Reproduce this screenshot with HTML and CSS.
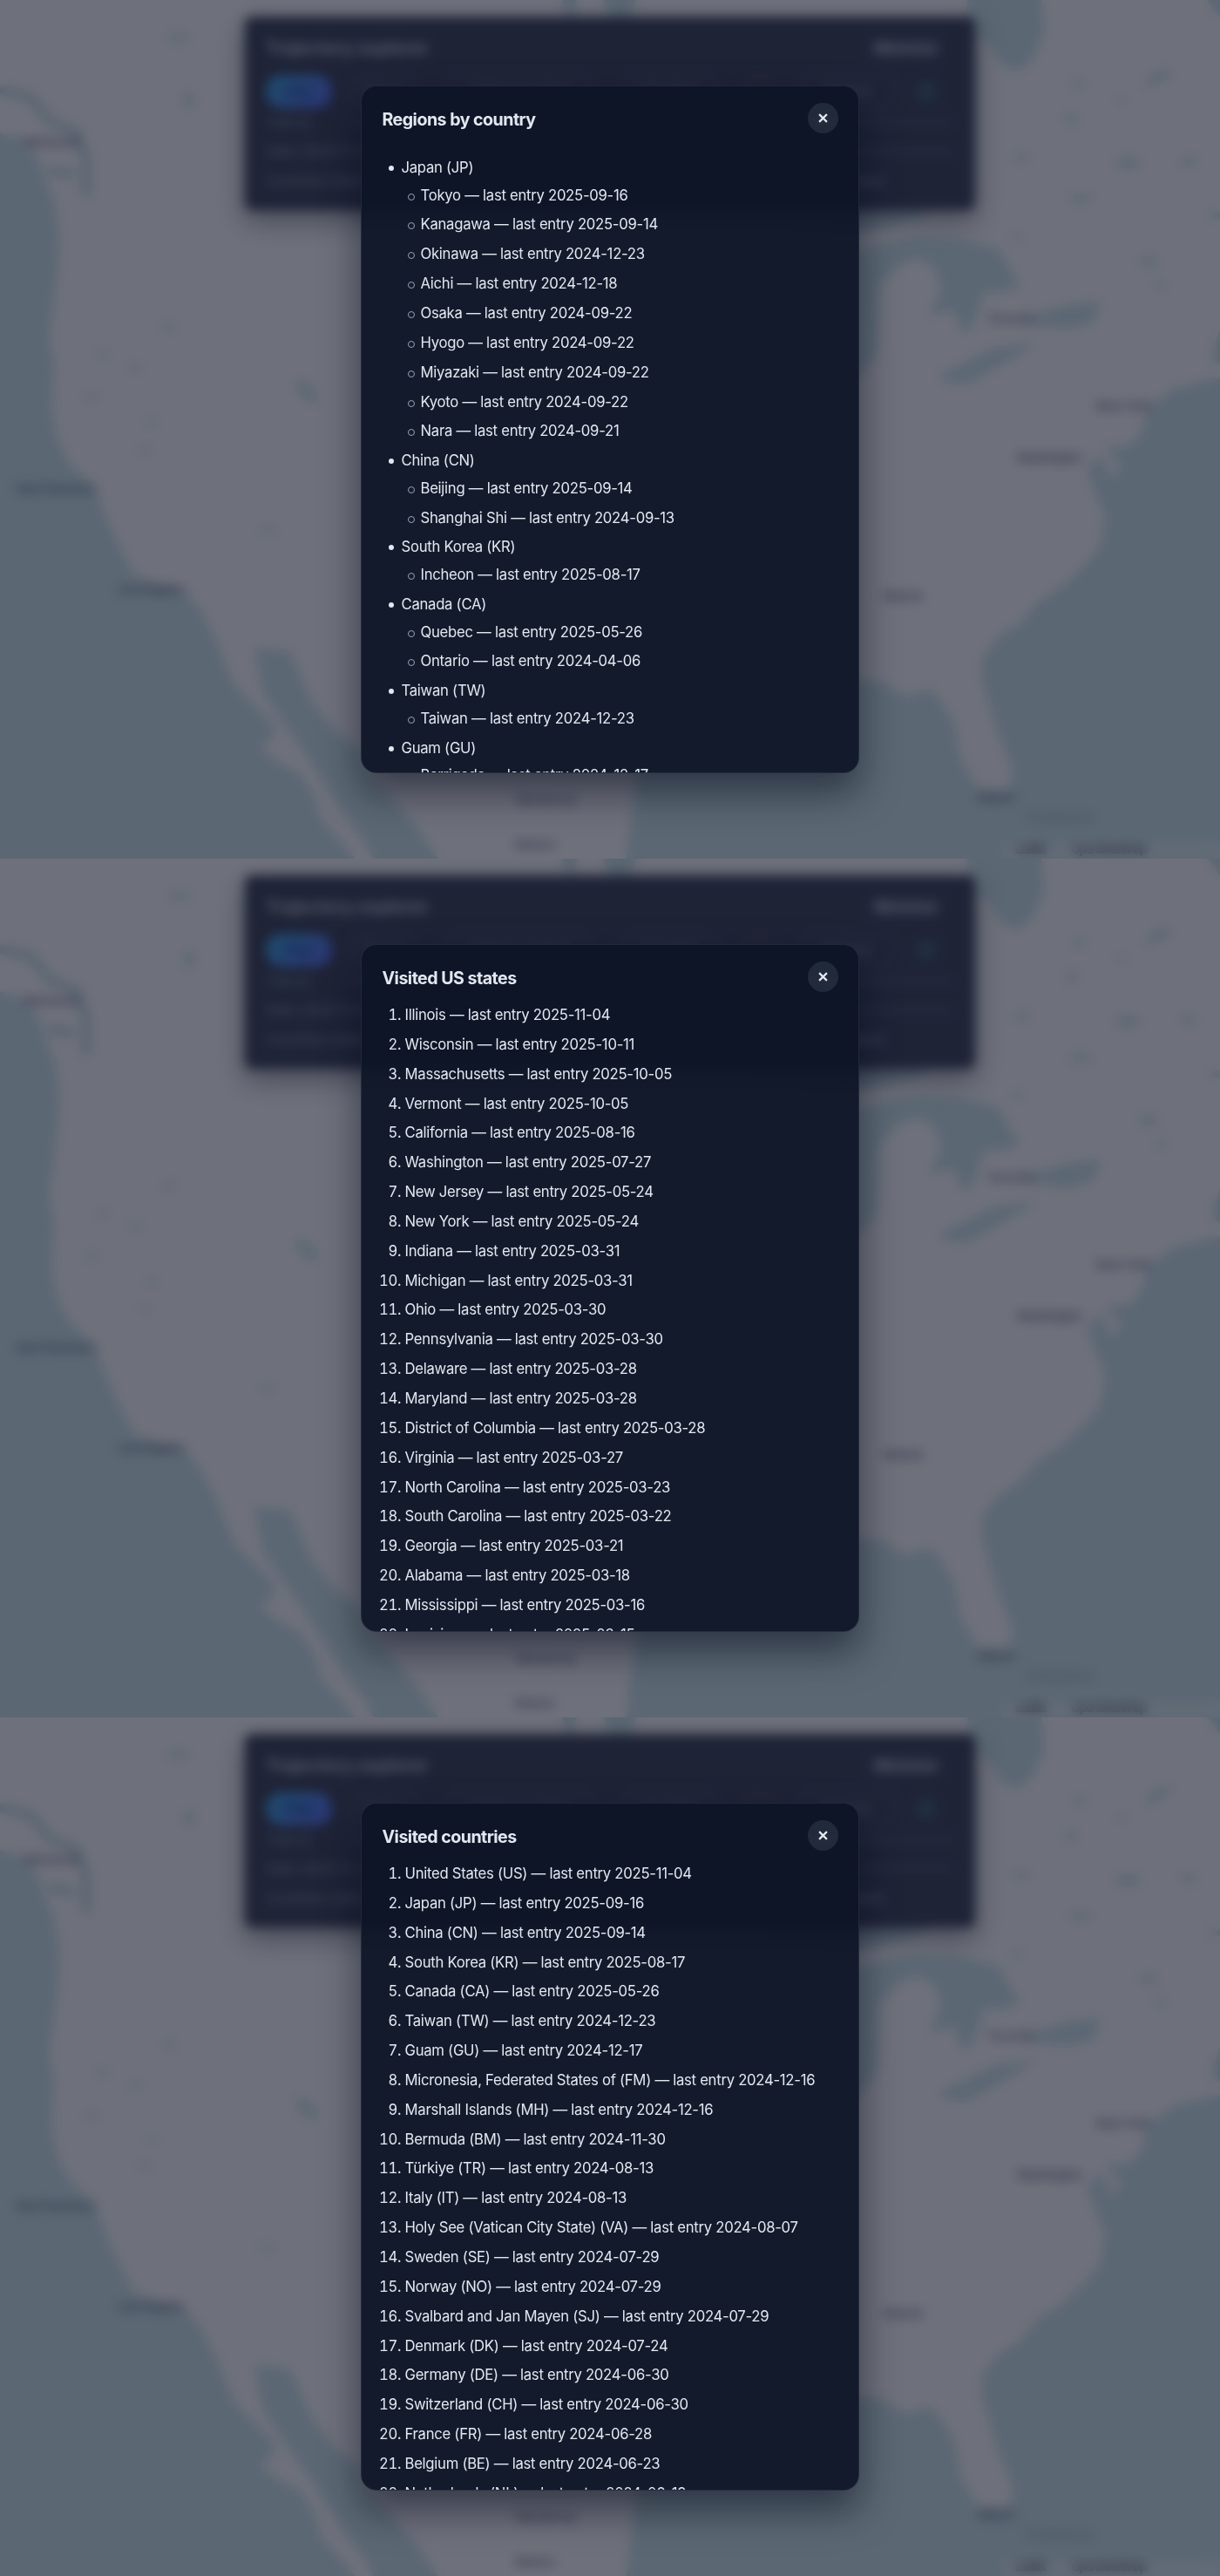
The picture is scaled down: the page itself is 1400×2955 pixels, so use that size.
FILE: index.html
```html
<!DOCTYPE html>
<html lang="en">
<head>
    <meta charset="UTF-8">
    <meta name="viewport" content="width=device-width, initial-scale=1.0">
    <title>Trajectory explorer</title>
    <link rel="stylesheet" href="styles.css">
</head>
<body>
    <template id="backdrop">
      <svg class="map" viewBox="0 0 1400 985" preserveAspectRatio="none" aria-hidden="true">
        <rect class="land" width="1400" height="985"/>
        <!-- Pacific, Gulf of California -->
        <path class="water" d="M0 152L25 160 42 178 52 205 63 235 68 270 66 310 61 350 56 385 62 420 59 470 66 505 80 532 108 556 120 590 138 630 155 660 185 670 215 682 230 700 248 735 268 785 290 808 315 832 313 846 298 858 320 875 345 888 362 915 368 940 388 962 408 985H0Z"/>
        <path class="channel" d="M0 103L35 112 58 140 88 152 98 180 99 225M55 195L85 200"/>
        <path class="water" d="M292 742L305 745 332 747 344 773 360 808 384 838 413 858 420 880 437 902 473 942 503 985H429L415 960 393 932 370 895 350 865 325 828 302 795Z"/>
        <!-- Atlantic and Gulf of Mexico -->
        <path class="water" d="M718 985L725 930 731 880 740 830 790 805 900 790 986 779 1013 782 1037 798 1070 791 1095 829 1103 873 1123 905 1157 905 1163 886 1143 835 1127 779 1127 754 1147 729 1170 716 1190 691 1220 672 1243 650 1263 628 1268 590 1257 565 1247 540 1263 521 1277 550 1287 534 1268 512 1297 512 1310 496 1317 468 1347 446 1400 433V985Z"/>
        <!-- lakes and bays -->
        <path class="water" d="M1110 0H1195L1198 38 1185 68 1168 82 1150 75 1135 50 1110 35ZM645 0H662L658 20 648 14ZM692 0H730L722 26 700 22ZM860 200L1060 200 1060 250 970 270 860 250Z"/>
        <path class="water" d="M960 290L1050 272 1100 274 1145 285 1170 328 1150 335 1128 335 1120 365 1112 380 1102 378 1095 355 1065 362 1080 335 1075 310 1055 297 1030 305 1010 328 1008 405 985 435 960 440Z"/>
        <path class="water" d="M1170 366L1225 350 1262 345 1255 370 1225 377 1190 373ZM1078 430L1110 415 1140 400 1190 393 1160 412 1110 440 1085 438ZM1400 378L1392 400 1392 415 1400 418ZM338 437L352 438 366 455 358 463 345 453ZM1310 100L1330 80 1348 82 1325 97ZM1385 0H1400V20Z"/>
        <g class="pond">
          <ellipse cx="1238" cy="96" rx="8" ry="5"/><ellipse cx="1229" cy="136" rx="8" ry="6"/>
          <ellipse cx="1172" cy="181" rx="10" ry="5"/><ellipse cx="1294" cy="187" rx="15" ry="7"/>
          <ellipse cx="1364" cy="185" rx="9" ry="6"/><ellipse cx="1240" cy="228" rx="14" ry="5"/>
          <ellipse cx="1168" cy="272" rx="8" ry="4"/><ellipse cx="1318" cy="300" rx="11" ry="6"/>
          <ellipse cx="1287" cy="115" rx="6" ry="4"/><ellipse cx="1395" cy="247" rx="10" ry="4"/>
          <ellipse cx="1332" cy="327" rx="5" ry="6"/><ellipse cx="205" cy="43" rx="14" ry="5"/>
          <ellipse cx="194" cy="375" rx="9" ry="4"/><ellipse cx="117" cy="407" rx="8" ry="4"/>
          <ellipse cx="155" cy="422" rx="8" ry="4"/><ellipse cx="174" cy="485" rx="6" ry="4"/>
          <ellipse cx="166" cy="516" rx="7" ry="4"/><ellipse cx="307" cy="608" rx="10" ry="4"/>
          <ellipse cx="105" cy="456" rx="9" ry="4"/><ellipse cx="217" cy="115" rx="7" ry="10"/>
        </g>
        <rect class="attribution" x="1150" y="965" width="250" height="20"/>
        <g class="places">
          <text x="25" y="168" textLength="68">Vancouver</text>
          <text x="18" y="566" textLength="92">San Francisco</text>
          <text x="136" y="681" textLength="76">Los Angeles</text>
          <text x="1132" y="371" textLength="56">Toronto</text>
          <text x="1257" y="471" textLength="64">New York</text>
          <text x="1166" y="530" textLength="76">Washington</text>
          <text x="1011" y="689" textLength="48">Atlanta</text>
          <text x="1122" y="920" textLength="42">Miami</text>
          <text x="592" y="923" textLength="70">Monterrey</text>
          <text x="590" y="974" textLength="48">Mexico</text>
          <text class="faint" x="1175" y="943" textLength="80">The Bahamas</text>
          <text x="1165" y="979" textLength="36">Leaflet</text>
          <text x="1229" y="979" textLength="88">OpenStreetMap</text>
        </g>
      </svg>
      <div class="explorer">
        <div class="explorer-head">
          <strong>Trajectory explorer</strong>
          <span class="minimize">Minimize</span>
        </div>
        <div class="explorer-tools">
          <span class="tool active">Play</span>
          <span class="tool">Pause</span>
          <span class="tool wide">Visited countries</span>
          <span class="tool mid">US states</span>
          <span class="tool dot"></span>
          <span class="tool mid">Regions</span>
          <span class="tool info">i</span>
        </div>
        <div class="explorer-row"><span class="link">Trail on</span><hr></div>
        <div class="explorer-row"><span>Date: 2025-11-04</span><hr></div>
        <div class="explorer-foot"><span>Countries visited</span><span>Updated</span></div>
      </div>
    </template>

    <section class="screen">
      <div class="overlay">
        <div class="modal">
          <div class="modal-header">
            <h2>Regions by country</h2>
            <button class="close" aria-label="Close"><svg viewBox="0 0 10 10"><path d="M1 1l8 8M9 1l-8 8"/></svg></button>
          </div>
          <ul class="region-list">
            <li>Japan (JP)
              <ul>
                <li>Tokyo — last entry 2025-09-16</li>
                <li>Kanagawa — last entry 2025-09-14</li>
                <li>Okinawa — last entry 2024-12-23</li>
                <li>Aichi — last entry 2024-12-18</li>
                <li>Osaka — last entry 2024-09-22</li>
                <li>Hyogo — last entry 2024-09-22</li>
                <li>Miyazaki — last entry 2024-09-22</li>
                <li>Kyoto — last entry 2024-09-22</li>
                <li>Nara — last entry 2024-09-21</li>
              </ul>
            </li>
            <li>China (CN)
              <ul>
                <li>Beijing — last entry 2025-09-14</li>
                <li>Shanghai Shi — last entry 2024-09-13</li>
              </ul>
            </li>
            <li>South Korea (KR)
              <ul>
                <li>Incheon — last entry 2025-08-17</li>
              </ul>
            </li>
            <li>Canada (CA)
              <ul>
                <li>Quebec — last entry 2025-05-26</li>
                <li>Ontario — last entry 2024-04-06</li>
              </ul>
            </li>
            <li>Taiwan (TW)
              <ul>
                <li>Taiwan — last entry 2024-12-23</li>
              </ul>
            </li>
            <li>Guam (GU)
              <ul>
                <li>Barrigada — last entry 2024-12-17</li>
              </ul>
            </li>
          </ul>
        </div>
      </div>
    </section>

    <section class="screen">
      <div class="overlay">
        <div class="modal">
          <div class="modal-header">
            <h2>Visited US states</h2>
            <button class="close" aria-label="Close"><svg viewBox="0 0 10 10"><path d="M1 1l8 8M9 1l-8 8"/></svg></button>
          </div>
          <ol class="visit-list">
            <li>Illinois — last entry 2025-11-04</li>
            <li>Wisconsin — last entry 2025-10-11</li>
            <li>Massachusetts — last entry 2025-10-05</li>
            <li>Vermont — last entry 2025-10-05</li>
            <li>California — last entry 2025-08-16</li>
            <li>Washington — last entry 2025-07-27</li>
            <li>New Jersey — last entry 2025-05-24</li>
            <li>New York — last entry 2025-05-24</li>
            <li>Indiana — last entry 2025-03-31</li>
            <li>Michigan — last entry 2025-03-31</li>
            <li>Ohio — last entry 2025-03-30</li>
            <li>Pennsylvania — last entry 2025-03-30</li>
            <li>Delaware — last entry 2025-03-28</li>
            <li>Maryland — last entry 2025-03-28</li>
            <li>District of Columbia — last entry 2025-03-28</li>
            <li>Virginia — last entry 2025-03-27</li>
            <li>North Carolina — last entry 2025-03-23</li>
            <li>South Carolina — last entry 2025-03-22</li>
            <li>Georgia — last entry 2025-03-21</li>
            <li>Alabama — last entry 2025-03-18</li>
            <li>Mississippi — last entry 2025-03-16</li>
            <li>Louisiana — last entry 2025-03-15</li>
          </ol>
        </div>
      </div>
    </section>

    <section class="screen">
      <div class="overlay">
        <div class="modal">
          <div class="modal-header">
            <h2>Visited countries</h2>
            <button class="close" aria-label="Close"><svg viewBox="0 0 10 10"><path d="M1 1l8 8M9 1l-8 8"/></svg></button>
          </div>
          <ol class="visit-list">
            <li>United States (US) — last entry 2025-11-04</li>
            <li>Japan (JP) — last entry 2025-09-16</li>
            <li>China (CN) — last entry 2025-09-14</li>
            <li>South Korea (KR) — last entry 2025-08-17</li>
            <li>Canada (CA) — last entry 2025-05-26</li>
            <li>Taiwan (TW) — last entry 2024-12-23</li>
            <li>Guam (GU) — last entry 2024-12-17</li>
            <li>Micronesia, Federated States of (FM) — last entry 2024-12-16</li>
            <li>Marshall Islands (MH) — last entry 2024-12-16</li>
            <li>Bermuda (BM) — last entry 2024-11-30</li>
            <li>Türkiye (TR) — last entry 2024-08-13</li>
            <li>Italy (IT) — last entry 2024-08-13</li>
            <li>Holy See (Vatican City State) (VA) — last entry 2024-08-07</li>
            <li>Sweden (SE) — last entry 2024-07-29</li>
            <li>Norway (NO) — last entry 2024-07-29</li>
            <li>Svalbard and Jan Mayen (SJ) — last entry 2024-07-29</li>
            <li>Denmark (DK) — last entry 2024-07-24</li>
            <li>Germany (DE) — last entry 2024-06-30</li>
            <li>Switzerland (CH) — last entry 2024-06-30</li>
            <li>France (FR) — last entry 2024-06-28</li>
            <li>Belgium (BE) — last entry 2024-06-23</li>
            <li>Netherlands (NL) — last entry 2024-06-19</li>
          </ol>
        </div>
      </div>
    </section>

    <script>
        const backdrop = document.getElementById("backdrop");

        document.querySelectorAll(".screen").forEach((screen) => {
          screen.prepend(backdrop.content.cloneNode(true));
        });
    </script>
</body>
</html>
```
FILE: styles.css
```css
* {
  box-sizing: border-box;
}

body {
  margin: 0;
  font-family: Inter, 'Liberation Sans', sans-serif;
  color: #e2e8f0;
  background: #020617;
}

.screen {
  position: relative;
  height: 985px;
  padding-top: 19px;
  overflow: hidden;
}

/* map */
.map {
  position: absolute;
  inset: 0;
  width: 100%;
  height: 100%;
}

.land {
  fill: #f8f9fa;
}

.water {
  fill: #cce4e8;
}

.channel {
  fill: none;
  stroke: #cce0e4;
  stroke-width: 11;
}

.pond {
  fill: #cce4e8;
  opacity: 0.8;
}

.attribution {
  fill: #ffffff;
  opacity: 0.3;
}

.places {
  font-size: 15px;
  font-weight: 600;
  fill: #555577;
  opacity: 0.65;
}

.places .faint {
  opacity: 0.35;
}

/* explorer panel under the overlay */
.explorer {
  position: relative;
  width: 838px;
  height: 222px;
  margin: 0 auto;
  padding: 19px 24px;
  border-radius: 8px;
  background: #444a5f;
  box-shadow: 0 12px 30px rgba(15, 23, 42, 0.4);
  color: #9aa0b4;
  font-size: 15px;
}

.explorer-head,
.explorer-foot {
  display: flex;
  justify-content: space-between;
  align-items: center;
}

.explorer-head {
  height: 34px;
  font-size: 20px;
  color: #c4c8d6;
}

.minimize {
  margin-right: 12px;
  padding: 2px 8px;
  border-radius: 16px;
  background: #50566b;
  font-size: 16px;
  font-weight: 700;
}

.explorer-tools {
  display: flex;
  gap: 32px;
  margin-top: 14px;
}

.tool {
  width: 76px;
  height: 38px;
  border-radius: 14px;
  border: 2px solid #626980;
  line-height: 34px;
  text-align: center;
  white-space: nowrap;
}

.tool.active {
  border: 0;
  margin-right: -10px;
  border-radius: 18px;
  background: linear-gradient(135deg, #42a8d8, #6470ee);
  color: #2a52a0;
  font-weight: 700;
  line-height: 38px;
}

.tool.wide {
  width: 170px;
}

.tool.mid {
  width: 110px;
}

.tool.dot {
  width: 30px;
  border-color: #7a626a;
}

.tool.info {
  width: 36px;
  border: 0;
  margin-left: -14px;
  background: #486074;
  transform: scale(0.7);
}

.explorer-row {
  display: flex;
  align-items: center;
  gap: 20px;
  height: 33px;
}

.explorer-row hr {
  flex: 1;
  border: 0;
  height: 5px;
  margin: 0;
  background: #5a6073;
}

.link {
  color: #86a8b8;
  width: 76px;
}

.explorer-foot {
  height: 34px;
  padding-right: 80px;
}

/* dialog */
.overlay {
  position: absolute;
  inset: 0;
  display: flex;
  align-items: center;
  justify-content: center;
  padding-bottom: 1px;
  background: rgba(2, 6, 23, 0.56);
  backdrop-filter: blur(6.5px);
}

.modal {
  width: 572px;
  height: 789px;
  padding: 19.5px 23.5px;
  border: 1px solid rgba(148, 163, 184, 0.14);
  border-radius: 18px;
  background: rgba(13, 20, 38, 0.94);
  box-shadow: 0 22px 44px rgba(2, 6, 23, 0.5);
  overflow: hidden;
}

.modal-header {
  display: flex;
  justify-content: space-between;
  align-items: center;
  height: 35px;
  margin-bottom: 13px;
}

.modal-header h2 {
  margin: 2px 0 0;
  font-size: 19.6px;
  font-weight: 700;
  letter-spacing: -0.52px;
}

.close {
  display: flex;
  align-items: center;
  justify-content: center;
  width: 35px;
  height: 35px;
  padding: 0;
  border: 0;
  border-radius: 50%;
  background: rgba(148, 163, 184, 0.15);
}

.close svg {
  width: 11px;
  height: 11px;
}

.close path {
  stroke: #e2e8f0;
  stroke-width: 2;
  fill: none;
}

.visit-list,
.region-list {
  margin: 0;
  padding-left: 26px;
  font-size: 16.7px;
  line-height: 27px;
  letter-spacing: -0.28px;
}

.region-list {
  margin-top: 26px;
  padding-left: 22px;
  list-style: none;
}

.region-list ul {
  margin-top: 4.6px;
  padding-left: 22px;
  list-style: none;
}

.visit-list li,
.region-list li {
  margin-bottom: 6.85px;
}

.region-list li {
  position: relative;
}

.region-list li::before {
  content: "";
  position: absolute;
  left: -15px;
  top: 11px;
  width: 6px;
  height: 6px;
  border-radius: 50%;
  background: #e2e8f0;
}

.region-list li li::before {
  border: 1px solid #94a3b8;
  background: none;
}
```
